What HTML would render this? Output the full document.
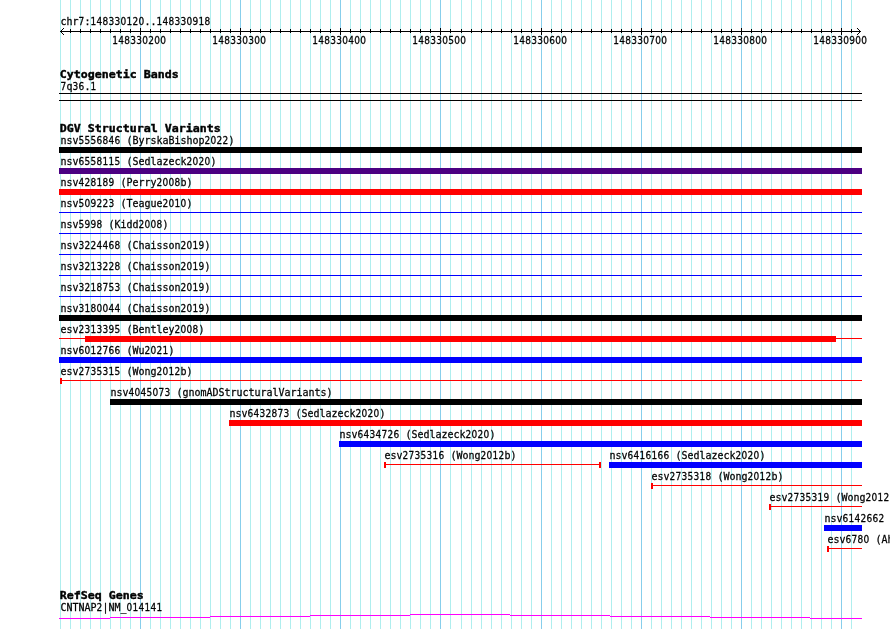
<!DOCTYPE html>
<html lang="en"><head><meta charset="utf-8"><title>DGV Genome Browser - chr7:148330120..148330918</title>
<style>
html,body{margin:0;padding:0;background:#fff;}
body{width:890px;height:629px;overflow:hidden;position:relative;}
svg{position:absolute;left:0;top:0;display:block;}
.g line,.g rect,.g polyline{shape-rendering:crispEdges;}
text{font-family:"DejaVu Sans Mono","Liberation Mono",monospace;font-size:10px;fill:#000;white-space:pre;stroke:#000;stroke-width:0.25px;}
tspan.d{font-family:"DejaVu Sans Condensed","DejaVu Sans Mono","Liberation Mono",monospace;}
text.b{font-weight:bold;font-size:11.6px;stroke-width:0.45px;}
</style></head><body>
<svg width="890" height="629" viewBox="0 0 890 629">
<rect width="890" height="629" fill="#fff"/>
<g class="g">
<g fill="#afeeee">
<rect x="60" y="0" width="1" height="629"/>
<rect x="70" y="0" width="1" height="629"/>
<rect x="80" y="0" width="1" height="629"/>
<rect x="90" y="0" width="1" height="629"/>
<rect x="100" y="0" width="1" height="629"/>
<rect x="110" y="0" width="1" height="629"/>
<rect x="120" y="0" width="1" height="629"/>
<rect x="130" y="0" width="1" height="629"/>
<rect x="150" y="0" width="1" height="629"/>
<rect x="160" y="0" width="1" height="629"/>
<rect x="170" y="0" width="1" height="629"/>
<rect x="180" y="0" width="1" height="629"/>
<rect x="190" y="0" width="1" height="629"/>
<rect x="200" y="0" width="1" height="629"/>
<rect x="210" y="0" width="1" height="629"/>
<rect x="220" y="0" width="1" height="629"/>
<rect x="230" y="0" width="1" height="629"/>
<rect x="250" y="0" width="1" height="629"/>
<rect x="260" y="0" width="1" height="629"/>
<rect x="270" y="0" width="1" height="629"/>
<rect x="280" y="0" width="1" height="629"/>
<rect x="290" y="0" width="1" height="629"/>
<rect x="300" y="0" width="1" height="629"/>
<rect x="310" y="0" width="1" height="629"/>
<rect x="320" y="0" width="1" height="629"/>
<rect x="330" y="0" width="1" height="629"/>
<rect x="350" y="0" width="1" height="629"/>
<rect x="360" y="0" width="1" height="629"/>
<rect x="370" y="0" width="1" height="629"/>
<rect x="380" y="0" width="1" height="629"/>
<rect x="390" y="0" width="1" height="629"/>
<rect x="400" y="0" width="1" height="629"/>
<rect x="410" y="0" width="1" height="629"/>
<rect x="420" y="0" width="1" height="629"/>
<rect x="430" y="0" width="1" height="629"/>
<rect x="450" y="0" width="1" height="629"/>
<rect x="461" y="0" width="1" height="629"/>
<rect x="471" y="0" width="1" height="629"/>
<rect x="481" y="0" width="1" height="629"/>
<rect x="491" y="0" width="1" height="629"/>
<rect x="501" y="0" width="1" height="629"/>
<rect x="511" y="0" width="1" height="629"/>
<rect x="521" y="0" width="1" height="629"/>
<rect x="531" y="0" width="1" height="629"/>
<rect x="551" y="0" width="1" height="629"/>
<rect x="561" y="0" width="1" height="629"/>
<rect x="571" y="0" width="1" height="629"/>
<rect x="581" y="0" width="1" height="629"/>
<rect x="591" y="0" width="1" height="629"/>
<rect x="601" y="0" width="1" height="629"/>
<rect x="611" y="0" width="1" height="629"/>
<rect x="621" y="0" width="1" height="629"/>
<rect x="631" y="0" width="1" height="629"/>
<rect x="651" y="0" width="1" height="629"/>
<rect x="661" y="0" width="1" height="629"/>
<rect x="671" y="0" width="1" height="629"/>
<rect x="681" y="0" width="1" height="629"/>
<rect x="691" y="0" width="1" height="629"/>
<rect x="701" y="0" width="1" height="629"/>
<rect x="711" y="0" width="1" height="629"/>
<rect x="721" y="0" width="1" height="629"/>
<rect x="731" y="0" width="1" height="629"/>
<rect x="751" y="0" width="1" height="629"/>
<rect x="761" y="0" width="1" height="629"/>
<rect x="771" y="0" width="1" height="629"/>
<rect x="781" y="0" width="1" height="629"/>
<rect x="791" y="0" width="1" height="629"/>
<rect x="801" y="0" width="1" height="629"/>
<rect x="811" y="0" width="1" height="629"/>
<rect x="821" y="0" width="1" height="629"/>
<rect x="831" y="0" width="1" height="629"/>
<rect x="851" y="0" width="1" height="629"/>
</g><g fill="#87ceeb">
<rect x="140" y="0" width="1" height="629"/>
<rect x="240" y="0" width="1" height="629"/>
<rect x="340" y="0" width="1" height="629"/>
<rect x="440" y="0" width="1" height="629"/>
<rect x="541" y="0" width="1" height="629"/>
<rect x="641" y="0" width="1" height="629"/>
<rect x="741" y="0" width="1" height="629"/>
<rect x="841" y="0" width="1" height="629"/>
</g>
<g fill="#000">
<rect x="60" y="31" width="801" height="1"/>
<rect x="70" y="29" width="1" height="4"/>
<rect x="80" y="29" width="1" height="4"/>
<rect x="90" y="29" width="1" height="4"/>
<rect x="100" y="29" width="1" height="4"/>
<rect x="110" y="29" width="1" height="4"/>
<rect x="120" y="29" width="1" height="4"/>
<rect x="130" y="29" width="1" height="4"/>
<rect x="150" y="29" width="1" height="4"/>
<rect x="160" y="29" width="1" height="4"/>
<rect x="170" y="29" width="1" height="4"/>
<rect x="180" y="29" width="1" height="4"/>
<rect x="190" y="29" width="1" height="4"/>
<rect x="200" y="29" width="1" height="4"/>
<rect x="210" y="29" width="1" height="4"/>
<rect x="220" y="29" width="1" height="4"/>
<rect x="230" y="29" width="1" height="4"/>
<rect x="250" y="29" width="1" height="4"/>
<rect x="260" y="29" width="1" height="4"/>
<rect x="270" y="29" width="1" height="4"/>
<rect x="280" y="29" width="1" height="4"/>
<rect x="290" y="29" width="1" height="4"/>
<rect x="300" y="29" width="1" height="4"/>
<rect x="310" y="29" width="1" height="4"/>
<rect x="320" y="29" width="1" height="4"/>
<rect x="330" y="29" width="1" height="4"/>
<rect x="350" y="29" width="1" height="4"/>
<rect x="360" y="29" width="1" height="4"/>
<rect x="370" y="29" width="1" height="4"/>
<rect x="380" y="29" width="1" height="4"/>
<rect x="390" y="29" width="1" height="4"/>
<rect x="400" y="29" width="1" height="4"/>
<rect x="410" y="29" width="1" height="4"/>
<rect x="420" y="29" width="1" height="4"/>
<rect x="430" y="29" width="1" height="4"/>
<rect x="450" y="29" width="1" height="4"/>
<rect x="461" y="29" width="1" height="4"/>
<rect x="471" y="29" width="1" height="4"/>
<rect x="481" y="29" width="1" height="4"/>
<rect x="491" y="29" width="1" height="4"/>
<rect x="501" y="29" width="1" height="4"/>
<rect x="511" y="29" width="1" height="4"/>
<rect x="521" y="29" width="1" height="4"/>
<rect x="531" y="29" width="1" height="4"/>
<rect x="551" y="29" width="1" height="4"/>
<rect x="561" y="29" width="1" height="4"/>
<rect x="571" y="29" width="1" height="4"/>
<rect x="581" y="29" width="1" height="4"/>
<rect x="591" y="29" width="1" height="4"/>
<rect x="601" y="29" width="1" height="4"/>
<rect x="611" y="29" width="1" height="4"/>
<rect x="621" y="29" width="1" height="4"/>
<rect x="631" y="29" width="1" height="4"/>
<rect x="651" y="29" width="1" height="4"/>
<rect x="661" y="29" width="1" height="4"/>
<rect x="671" y="29" width="1" height="4"/>
<rect x="681" y="29" width="1" height="4"/>
<rect x="691" y="29" width="1" height="4"/>
<rect x="701" y="29" width="1" height="4"/>
<rect x="711" y="29" width="1" height="4"/>
<rect x="721" y="29" width="1" height="4"/>
<rect x="731" y="29" width="1" height="4"/>
<rect x="751" y="29" width="1" height="4"/>
<rect x="761" y="29" width="1" height="4"/>
<rect x="771" y="29" width="1" height="4"/>
<rect x="781" y="29" width="1" height="4"/>
<rect x="791" y="29" width="1" height="4"/>
<rect x="801" y="29" width="1" height="4"/>
<rect x="811" y="29" width="1" height="4"/>
<rect x="821" y="29" width="1" height="4"/>
<rect x="831" y="29" width="1" height="4"/>
<rect x="851" y="29" width="1" height="4"/>
<rect x="61" y="30" width="1" height="1"/>
<rect x="62" y="29" width="1" height="1"/>
<rect x="63" y="28" width="1" height="1"/>
<rect x="61" y="32" width="1" height="1"/>
<rect x="62" y="33" width="1" height="1"/>
<rect x="63" y="34" width="1" height="1"/>
<rect x="859" y="30" width="1" height="1"/>
<rect x="858" y="29" width="1" height="1"/>
<rect x="857" y="28" width="1" height="1"/>
<rect x="859" y="32" width="1" height="1"/>
<rect x="858" y="33" width="1" height="1"/>
<rect x="857" y="34" width="1" height="1"/>
<rect x="140" y="28" width="1" height="7"/>
<rect x="240" y="28" width="1" height="7"/>
<rect x="340" y="28" width="1" height="7"/>
<rect x="440" y="28" width="1" height="7"/>
<rect x="541" y="28" width="1" height="7"/>
<rect x="641" y="28" width="1" height="7"/>
<rect x="741" y="28" width="1" height="7"/>
<rect x="841" y="28" width="1" height="7"/>
</g>
<rect x="59" y="93" width="803" height="1" fill="#000"/>
<rect x="59" y="100" width="803" height="1" fill="#000"/>
<rect x="59" y="147" width="803" height="6" fill="#000"/>
<rect x="59" y="168" width="803" height="6" fill="#4b0082"/>
<rect x="59" y="189" width="803" height="6" fill="#f00"/>
<rect x="59" y="212" width="803" height="1" fill="#00f"/>
<rect x="59" y="233" width="803" height="1" fill="#00f"/>
<rect x="59" y="254" width="803" height="1" fill="#00f"/>
<rect x="59" y="275" width="803" height="1" fill="#00f"/>
<rect x="59" y="296" width="803" height="1" fill="#00f"/>
<rect x="59" y="315" width="803" height="6" fill="#000"/>
<rect x="59" y="338" width="803" height="1" fill="#f00"/>
<rect x="85" y="336" width="751" height="6" fill="#f00"/>
<rect x="59" y="357" width="803" height="6" fill="#00f"/>
<rect x="60" y="380" width="802" height="1" fill="#f00"/>
<rect x="60" y="378" width="2" height="6" fill="#f00"/>
<rect x="110" y="399" width="752" height="6" fill="#000"/>
<rect x="229" y="420" width="633" height="6" fill="#f00"/>
<rect x="339" y="441" width="523" height="6" fill="#00f"/>
<rect x="384" y="464" width="217" height="1" fill="#f00"/>
<rect x="384" y="462" width="2" height="6" fill="#f00"/>
<rect x="599" y="462" width="2" height="6" fill="#f00"/>
<rect x="609" y="462" width="253" height="6" fill="#00f"/>
<rect x="651" y="485" width="211" height="1" fill="#f00"/>
<rect x="651" y="483" width="2" height="6" fill="#f00"/>
<rect x="769" y="506" width="93" height="1" fill="#f00"/>
<rect x="769" y="504" width="2" height="6" fill="#f00"/>
<rect x="824" y="525" width="38" height="6" fill="#00f"/>
<rect x="827" y="548" width="35" height="1" fill="#f00"/>
<rect x="827" y="546" width="2" height="6" fill="#f00"/>
<g fill="#f0f">
<rect x="59" y="618" width="51" height="1"/>
<rect x="110" y="617" width="100" height="1"/>
<rect x="210" y="616" width="100" height="1"/>
<rect x="310" y="615" width="100" height="1"/>
<rect x="410" y="614" width="100" height="1"/>
<rect x="510" y="615" width="100" height="1"/>
<rect x="610" y="616" width="100" height="1"/>
<rect x="710" y="617" width="100" height="1"/>
<rect x="810" y="618" width="52" height="1"/>
</g>
</g>
<g opacity="0.999">
<text transform="translate(60.4,25) scale(1,1.1)" x="0 6 12 18.15 24 30.15 36.15 42.15 48.15 54.15 60.15 66.15 72.15 78.15 84 90 96.15 102.15 108.15 114.15 120.15 126.15 132.15 138.15 144.15">chr<tspan class="d">7</tspan>:<tspan class="d">148330120</tspan>..<tspan class="d">148330918</tspan></text>
<text transform="translate(112.2,44) scale(1,1.1)" x="0.15 6.15 12.15 18.15 24.15 30.15 36.15 42.15 48.15"><tspan class="d">148330200</tspan></text>
<text transform="translate(212.2,44) scale(1,1.1)" x="0.15 6.15 12.15 18.15 24.15 30.15 36.15 42.15 48.15"><tspan class="d">148330300</tspan></text>
<text transform="translate(312.2,44) scale(1,1.1)" x="0.15 6.15 12.15 18.15 24.15 30.15 36.15 42.15 48.15"><tspan class="d">148330400</tspan></text>
<text transform="translate(412.2,44) scale(1,1.1)" x="0.15 6.15 12.15 18.15 24.15 30.15 36.15 42.15 48.15"><tspan class="d">148330500</tspan></text>
<text transform="translate(513.2,44) scale(1,1.1)" x="0.15 6.15 12.15 18.15 24.15 30.15 36.15 42.15 48.15"><tspan class="d">148330600</tspan></text>
<text transform="translate(613.2,44) scale(1,1.1)" x="0.15 6.15 12.15 18.15 24.15 30.15 36.15 42.15 48.15"><tspan class="d">148330700</tspan></text>
<text transform="translate(713.2,44) scale(1,1.1)" x="0.15 6.15 12.15 18.15 24.15 30.15 36.15 42.15 48.15"><tspan class="d">148330800</tspan></text>
<text transform="translate(813.2,44) scale(1,1.1)" x="0.15 6.15 12.15 18.15 24.15 30.15 36.15 42.15 48.15"><tspan class="d">148330900</tspan></text>
<text transform="translate(59.7,78) scale(1,0.95)" class="b" x="0 7 14 21 28 35 42 49 56 63 70 77 84 91 98 105 112">Cytogenetic Bands</text>
<text transform="translate(60.4,90) scale(1,1.1)" x="0.15 6 12.15 18.15 24 30.15"><tspan class="d">7</tspan>q<tspan class="d">36</tspan>.<tspan class="d">1</tspan></text>
<text transform="translate(59.7,132) scale(1,0.95)" class="b" x="0 7 14 21 28 35 42 49 56 63 70 77 84 91 98 105 112 119 126 133 140 147 154">DGV Structural Variants</text>
<text transform="translate(60.4,144) scale(1,1.1)" x="0 6 12 18.15 24.15 30.15 36.15 42.15 48.15 54.15 60 66 72 78 84 90 96 102 108 114 120 126 132 138 144.15 150.15 156.15 162.15 168">nsv<tspan class="d">5556846</tspan> (ByrskaBishop<tspan class="d">2022</tspan>)</text>
<text transform="translate(60.4,165) scale(1,1.1)" x="0 6 12 18.15 24.15 30.15 36.15 42.15 48.15 54.15 60 66 72 78 84 90 96 102 108 114 120 126.15 132.15 138.15 144.15 150">nsv<tspan class="d">6558115</tspan> (Sedlazeck<tspan class="d">2020</tspan>)</text>
<text transform="translate(60.4,186) scale(1,1.1)" x="0 6 12 18.15 24.15 30.15 36.15 42.15 48.15 54 60 66 72 78 84 90 96.15 102.15 108.15 114.15 120 126">nsv<tspan class="d">428189</tspan> (Perry<tspan class="d">2008</tspan>b)</text>
<text transform="translate(60.4,207) scale(1,1.1)" x="0 6 12 18.15 24.15 30.15 36.15 42.15 48.15 54 60 66 72 78 84 90 96 102.15 108.15 114.15 120.15 126">nsv<tspan class="d">509223</tspan> (Teague<tspan class="d">2010</tspan>)</text>
<text transform="translate(60.4,228) scale(1,1.1)" x="0 6 12 18.15 24.15 30.15 36.15 42 48 54 60 66 72 78.15 84.15 90.15 96.15 102">nsv<tspan class="d">5998</tspan> (Kidd<tspan class="d">2008</tspan>)</text>
<text transform="translate(60.4,249) scale(1,1.1)" x="0 6 12 18.15 24.15 30.15 36.15 42.15 48.15 54.15 60 66 72 78 84 90 96 102 108 114 120.15 126.15 132.15 138.15 144">nsv<tspan class="d">3224468</tspan> (Chaisson<tspan class="d">2019</tspan>)</text>
<text transform="translate(60.4,270) scale(1,1.1)" x="0 6 12 18.15 24.15 30.15 36.15 42.15 48.15 54.15 60 66 72 78 84 90 96 102 108 114 120.15 126.15 132.15 138.15 144">nsv<tspan class="d">3213228</tspan> (Chaisson<tspan class="d">2019</tspan>)</text>
<text transform="translate(60.4,291) scale(1,1.1)" x="0 6 12 18.15 24.15 30.15 36.15 42.15 48.15 54.15 60 66 72 78 84 90 96 102 108 114 120.15 126.15 132.15 138.15 144">nsv<tspan class="d">3218753</tspan> (Chaisson<tspan class="d">2019</tspan>)</text>
<text transform="translate(60.4,312) scale(1,1.1)" x="0 6 12 18.15 24.15 30.15 36.15 42.15 48.15 54.15 60 66 72 78 84 90 96 102 108 114 120.15 126.15 132.15 138.15 144">nsv<tspan class="d">3180044</tspan> (Chaisson<tspan class="d">2019</tspan>)</text>
<text transform="translate(60.4,333) scale(1,1.1)" x="0 6 12 18.15 24.15 30.15 36.15 42.15 48.15 54.15 60 66 72 78 84 90 96 102 108 114.15 120.15 126.15 132.15 138">esv<tspan class="d">2313395</tspan> (Bentley<tspan class="d">2008</tspan>)</text>
<text transform="translate(60.4,354) scale(1,1.1)" x="0 6 12 18.15 24.15 30.15 36.15 42.15 48.15 54.15 60 66 72 78 84.15 90.15 96.15 102.15 108">nsv<tspan class="d">6012766</tspan> (Wu<tspan class="d">2021</tspan>)</text>
<text transform="translate(60.4,375) scale(1,1.1)" x="0 6 12 18.15 24.15 30.15 36.15 42.15 48.15 54.15 60 66 72 78 84 90 96.15 102.15 108.15 114.15 120 126">esv<tspan class="d">2735315</tspan> (Wong<tspan class="d">2012</tspan>b)</text>
<text transform="translate(110.4,396) scale(1,1.1)" x="0 6 12 18.15 24.15 30.15 36.15 42.15 48.15 54.15 60 66 72 78 84 90 96 102 108 114 120 126 132 138 144 150 156 162 168 174 180 186 192 198 204 210 216">nsv<tspan class="d">4045073</tspan> (gnomADStructuralVariants)</text>
<text transform="translate(229.4,417) scale(1,1.1)" x="0 6 12 18.15 24.15 30.15 36.15 42.15 48.15 54.15 60 66 72 78 84 90 96 102 108 114 120 126.15 132.15 138.15 144.15 150">nsv<tspan class="d">6432873</tspan> (Sedlazeck<tspan class="d">2020</tspan>)</text>
<text transform="translate(339.4,438) scale(1,1.1)" x="0 6 12 18.15 24.15 30.15 36.15 42.15 48.15 54.15 60 66 72 78 84 90 96 102 108 114 120 126.15 132.15 138.15 144.15 150">nsv<tspan class="d">6434726</tspan> (Sedlazeck<tspan class="d">2020</tspan>)</text>
<text transform="translate(384.4,459) scale(1,1.1)" x="0 6 12 18.15 24.15 30.15 36.15 42.15 48.15 54.15 60 66 72 78 84 90 96.15 102.15 108.15 114.15 120 126">esv<tspan class="d">2735316</tspan> (Wong<tspan class="d">2012</tspan>b)</text>
<text transform="translate(609.4,459) scale(1,1.1)" x="0 6 12 18.15 24.15 30.15 36.15 42.15 48.15 54.15 60 66 72 78 84 90 96 102 108 114 120 126.15 132.15 138.15 144.15 150">nsv<tspan class="d">6416166</tspan> (Sedlazeck<tspan class="d">2020</tspan>)</text>
<text transform="translate(651.4,480) scale(1,1.1)" x="0 6 12 18.15 24.15 30.15 36.15 42.15 48.15 54.15 60 66 72 78 84 90 96.15 102.15 108.15 114.15 120 126">esv<tspan class="d">2735318</tspan> (Wong<tspan class="d">2012</tspan>b)</text>
<text transform="translate(769.4,501) scale(1,1.1)" x="0 6 12 18.15 24.15 30.15 36.15 42.15 48.15 54.15 60 66 72 78 84 90 96.15 102.15 108.15 114.15 120 126">esv<tspan class="d">2735319</tspan> (Wong<tspan class="d">2012</tspan>b)</text>
<text transform="translate(824.4,522) scale(1,1.1)" x="0 6 12 18.15 24.15 30.15 36.15 42.15 48.15 54.15 60 66 72 78 84 90 96 102 108.15 114.15 120.15 126.15 132">nsv<tspan class="d">6142662</tspan> (Audano<tspan class="d">2019</tspan>)</text>
<text transform="translate(827.4,543) scale(1,1.1)" x="0 6 12 18.15 24.15 30.15 36.15 42 48 54 60 66 72.15 78.15 84.15 90.15 96">esv<tspan class="d">6780</tspan> (Ahn<tspan class="d">2009</tspan>)</text>
<text transform="translate(59.7,599) scale(1,0.95)" class="b" x="0 7 14 21 28 35 42 49 56 63 70 77">RefSeq Genes</text>
<text transform="translate(60.4,611) scale(1,1.1)" x="0 6 12 18 24 30 36.15 42 48 54 60 66.15 72.15 78.15 84.15 90.15 96.15">CNTNAP<tspan class="d">2</tspan>|NM_<tspan class="d">014141</tspan></text>
</g>
</svg>
</body></html>
